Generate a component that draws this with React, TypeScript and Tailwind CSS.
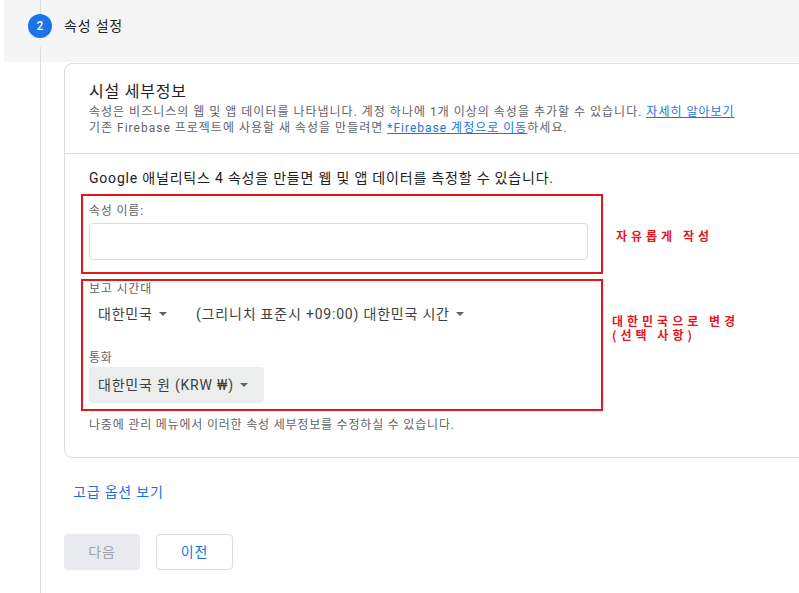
const font = { fontFamily: '"Roboto", "Noto Sans CJK KR", sans-serif' };

function Caret() {
  return (
    <svg width="8" height="4" viewBox="0 0 8 4" className="ml-[6px] inline-block">
      <path d="M0 0 L8 0 L4 4 Z" fill="#5f6368" />
    </svg>
  );
}

function Note({ children }: { children: React.ReactNode }) {
  return (
    <div
      className="text-[12px] font-bold leading-[14px] tracking-[4px] text-[#e8141c] whitespace-nowrap"
      style={{ fontFamily: '"Noto Sans CJK KR", sans-serif' }}
    >
      {children}
    </div>
  );
}

export default function App() {
  return (
    <div
      className="w-[799px] h-[593px] overflow-hidden bg-white pl-[4px] flex flex-col tracking-[0.8px]"
      style={font}
    >
      {/* step header */}
      <div className="h-[62px] bg-[#f5f5f5] flex shrink-0">
        <div className="w-[60px] flex flex-col">
          <div className="ml-[36px] w-px h-[14px] bg-[#dadce0]" />
          <div className="ml-[24px] w-[24px] h-[24px] rounded-full bg-[#1a73e8] text-white text-[12px] font-medium tracking-normal flex items-center justify-center">
            2
          </div>
          <div className="ml-[36px] w-px flex-1 mt-[9px] bg-[#dadce0]" />
        </div>
        <div className="pt-[15px] text-[14px] leading-[22px] text-[#202124]">속성 설정</div>
      </div>

      {/* body */}
      <div className="flex flex-1">
        <div className="w-[60px] shrink-0">
          <div className="ml-[36px] w-px h-full bg-[#dadce0]" />
        </div>
        <div className="flex flex-col">
          <div className="mt-[1px] w-[760px] border border-[#dadce0] rounded-[8px]">
            <div className="px-[24px] pt-[16px] pb-[17px] border-b border-[#dadce0]">
              <div className="text-[16px] leading-[24px] text-[#202124]">시설 세부정보</div>
              <div className="text-[12px] leading-[16px] tracking-[1px] text-[#5f6368] whitespace-nowrap">
                속성은 비즈니스의 웹 및 앱 데이터를 나타냅니다. 계정 하나에 1개 이상의 속성을 추가할 수 있습니다.{' '}
                <span className="text-[#1a73e8] underline">자세히 알아보기</span>
              </div>
              <div className="text-[12px] leading-[16px] tracking-[1px] text-[#5f6368] whitespace-nowrap">
                기존 Firebase 프로젝트에 사용할 새 속성을 만들려면{' '}
                <span className="text-[#1a73e8] underline">*Firebase 계정으로 이동</span>하세요.
              </div>
            </div>

            <div className="px-[24px] pt-[14px] pb-[24px]">
              <div className="text-[14px] leading-[20px] text-[#202124] whitespace-nowrap">
                Google 애널리틱스 4 속성을 만들면 웹 및 앱 데이터를 측정할 수 있습니다.
              </div>

              {/* property name */}
              <div className="flex items-center mt-[6px] -ml-[8px]">
                <div className="w-[522px] h-[80px] shrink-0 border-2 border-[#e8141c] px-[6px] pt-[7px]">
                  <div className="text-[12px] leading-[16px] text-[#5f6368]">속성 이름:</div>
                  <div className="mt-[4px] w-[499px] h-[37px] border border-[#dadce0] rounded-[4px]" />
                </div>
                <div className="ml-[13px] mt-[4px]">
                  <Note>자유롭게 작성</Note>
                </div>
              </div>

              {/* timezone + currency */}
              <div className="flex items-start mt-[5px] -ml-[8px]">
                <div className="w-[522px] h-[132px] shrink-0 border-2 border-[#e8141c] px-[6px]">
                  <div className="text-[12px] leading-[16px] text-[#5f6368]">보고 시간대</div>
                  <div className="flex items-center mt-[7px] h-[20px] text-[14px] text-[#3c4043] whitespace-nowrap">
                    <span className="w-[98px] pl-[9px] flex items-center">
                      대한민국
                      <Caret />
                    </span>
                    <span className="pl-[9px] flex items-center">
                      (그리니치 표준시 +09:00) 대한민국 시간
                      <Caret />
                    </span>
                  </div>
                  <div className="mt-[26px] text-[12px] leading-[16px] text-[#5f6368]">통화</div>
                  <div className="mt-[1px] w-[175px] h-[36px] rounded-[4px] bg-[#eceded] flex items-center pl-[9px] text-[14px] text-[#3c4043] whitespace-nowrap">
                    대한민국 원 (KRW ₩)
                    <Caret />
                  </div>
                </div>
                <div className="ml-[9px] mt-[35px]">
                  <Note>
                    대한민국으로 변경
                    <br />
                    (선택 사항)
                  </Note>
                </div>
              </div>

              <div className="mt-[6px] text-[12px] leading-[16px] text-[#5f6368] whitespace-nowrap">
                나중에 관리 메뉴에서 이러한 속성 세부정보를 수정하실 수 있습니다.
              </div>
            </div>
          </div>

          <div className="mt-[24px] ml-[9px] text-[14px] leading-[20px] text-[#1a73e8]">고급 옵션 보기</div>

          <div className="mt-[32px] flex gap-[16px]">
            <div className="w-[76px] h-[36px] rounded-[4px] bg-[#e8eaed] text-[#a0a4a8] text-[14px] flex items-center justify-center">
              다음
            </div>
            <div className="w-[77px] h-[36px] rounded-[4px] border border-[#dadce0] text-[#1a73e8] text-[14px] flex items-center justify-center">
              이전
            </div>
          </div>
        </div>
      </div>
    </div>
  );
}
